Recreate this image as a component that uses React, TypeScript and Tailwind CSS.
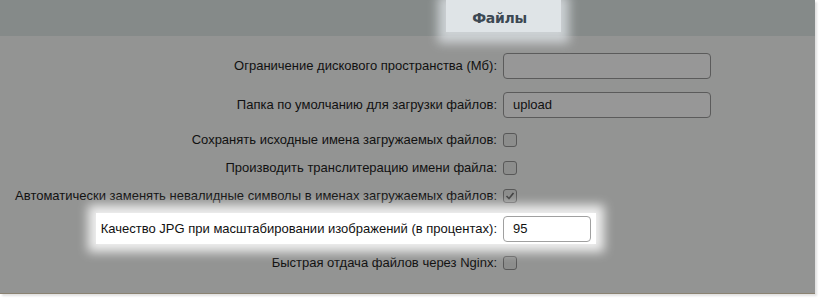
const font = { fontFamily: '"Liberation Sans", Arial, sans-serif' };

function Checkbox({ checked }: { checked: boolean }) {
  return (
    <div className="w-[14px] h-[14px] rounded-[3px] border border-[#585858] bg-[#8c8d8c] flex items-center justify-center">
      {checked && (
        <svg width="10" height="10" viewBox="0 0 10 10">
          <polyline points="1.5,5 4,7.5 8.5,2" fill="none" stroke="#3f3f3f" strokeWidth="1.6" />
        </svg>
      )}
    </div>
  );
}

function Label({ children }: { children: React.ReactNode }) {
  return <div className="w-[503px] pr-[6px] text-right text-[13px] text-[#111] whitespace-nowrap">{children}</div>;
}

export default function App() {
  return (
    <div className="w-[820px] h-[300px] bg-white" style={font}>
      <div className="w-[815px] h-[294px] bg-[#939493] border-b border-[#8a8272] shadow-[2px_2px_2px_rgba(0,0,0,0.12)] flex flex-col">
        {/* Header */}
        <div className="relative h-[36px] bg-[#858a89]">
          <div className="absolute left-[446px] top-0 w-[115px] h-[32px] bg-[#dfe4e7] shadow-[0_3px_10px_8px_rgba(223,228,231,0.8)] flex items-center justify-center pt-[4px]">
            <span className="-ml-[8px] text-[14px] font-bold text-[#3c4853]" style={{ fontFamily: '"DejaVu Sans", Verdana, sans-serif', letterSpacing: "-0.3px" }}>
              Файлы
            </span>
          </div>
        </div>

        {/* Row 1 */}
        <div className="mt-[17px] h-[26px] flex items-center">
          <Label>Ограничение дискового пространства (Мб):</Label>
          <div className="w-[208px] h-[26px] rounded-[4px] border border-[#5b5b5b] bg-[#979797]" />
        </div>

        {/* Row 2 */}
        <div className="mt-[13px] h-[26px] flex items-center">
          <Label>Папка по умолчанию для загрузки файлов:</Label>
          <div className="w-[208px] h-[26px] rounded-[4px] border border-[#5b5b5b] bg-[#979797] flex items-center pl-[9px] text-[13px] text-[#111]">
            upload
          </div>
        </div>

        {/* Checkbox rows */}
        <div className="mt-[8px] h-[28px] flex items-center">
          <Label>Сохранять исходные имена загружаемых файлов:</Label>
          <Checkbox checked={false} />
        </div>
        <div className="h-[28px] flex items-center">
          <Label>Производить транслитерацию имени файла:</Label>
          <Checkbox checked={false} />
        </div>
        <div className="h-[28px] flex items-center">
          <Label>Автоматически заменять невалидные символы в именах загружаемых файлов:</Label>
          <Checkbox checked={true} />
        </div>

        {/* Highlighted row */}
        <div className="relative mt-[1px] h-[35px] flex items-center">
          <div className="absolute left-[96px] top-[2px] w-[500px] h-[31px] bg-white shadow-[0_0_10px_8px_rgba(255,255,255,0.85)]" />
          <div className="relative flex items-center">
            <Label>Качество JPG при масштабировании изображений (в процентах):</Label>
            <div className="w-[88px] h-[26px] rounded-[4px] border border-[#a0a0a0] bg-white flex items-center pl-[9px] text-[13px] text-[#111]">
              95
            </div>
          </div>
        </div>

        <div className="mt-[3px] h-[28px] flex items-center">
          <Label>Быстрая отдача файлов через Nginx:</Label>
          <Checkbox checked={false} />
        </div>
      </div>
    </div>
  );
}
